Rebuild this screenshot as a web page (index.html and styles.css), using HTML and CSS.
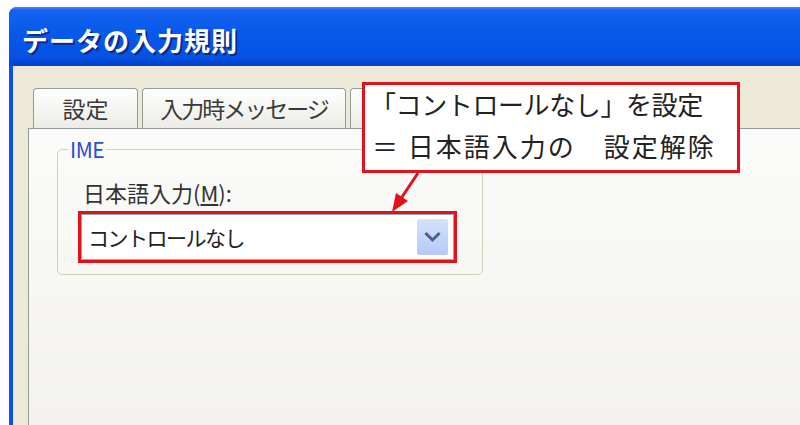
FILE: index.html
```html
<!DOCTYPE html>
<html>
<head>
  <title>データの入力規則</title>
  <link rel="stylesheet" href="styles.css">
</head>
<body>
  <div class="window">
    <div class="titlebar">データの入力規則</div>

    <div class="client">
      <div class="tabs">
        <div class="tab tab-settings">設定</div>
        <div class="tab tab-input">入力時メッセージ</div>
        <!-- these two sit under the callout -->
        <div class="tab tab-error"></div>
        <div class="tab tab-ime"></div>
      </div>

      <div class="panel">
        <fieldset class="group">
          <legend>IME</legend>
          <div class="field-label">日本語入力(<u>M</u>):</div>
          <div class="mark">
            <div class="combo">
              <span class="combo-text">コントロールなし</span>
              <span class="drop">
                <svg width="31" height="36" viewBox="0 0 31 36">
                  <polyline points="9.5,15 15.5,21 21.5,15" fill="none" stroke="#4d6185" stroke-width="3" stroke-linecap="square"/>
                </svg>
              </span>
            </div>
          </div>
        </fieldset>
      </div>
    </div>
  </div>

  <!-- annotation over the dialog -->
  <div class="callout">
    <div class="line1">「コントロールなし」を設定</div>
    <div class="line2">＝ 日本語入力の　設定解除</div>
  </div>

  <svg class="arrow" width="800" height="425" viewBox="0 0 800 425">
    <line x1="418" y1="173" x2="400" y2="200" stroke="#e2121c" stroke-width="3"/>
    <polygon points="392,212 408,201 396,193" fill="#e2121c"/>
  </svg>
</body>
</html>
```

FILE: styles.css
```css
body {
  margin: 0;
  padding: 0;
  background: #fff;
  font-family: "Noto Sans CJK JP", "Noto Sans", sans-serif;
  overflow: hidden;
}

.window {
  margin: 7px 0 0 9px;
  height: 418px;
  display: flex;
  flex-direction: column;
  background: #0a50e6;
  border-radius: 8px 0 0 0;
  overflow: hidden;
}

.titlebar {
  box-sizing: border-box;
  height: 59px;
  padding: 18px 0 0 13px;
  font-size: 26px;
  line-height: 30px;
  font-weight: bold;
  letter-spacing: 1px;
  color: #fff;
  text-shadow: 2px 2px 0 #0a2a8c;
  background: linear-gradient(#4a8cf7 0, #1563ee 3px, #0758ec 45%, #0552e2 85%, #0340c8 100%);
}

.client {
  flex: 1;
  display: flex;
  flex-direction: column;
  margin-left: 4px;
  padding: 22px 0 0 15px;
  background: #ece9d8;
}

.tabs {
  display: flex;
  gap: 4px;
  padding-left: 5px;
  height: 40px;
}

.tab {
  box-sizing: border-box;
  height: 40px;
  border: 1px solid #919b9c;
  border-bottom: none;
  border-radius: 4px 4px 0 0;
  background: linear-gradient(#ffffff, #ecebe6);
  color: #3a3a3a;
  font-size: 23px;
  line-height: 38px;
  text-align: center;
  white-space: nowrap;
}

.tab-settings {
  width: 105px;
}

.tab-input {
  width: 204px;
  letter-spacing: -2px;
}

.tab-error {
  width: 200px;
}

.tab-ime {
  width: 150px;
  background: #fcfcfe;
}

.panel {
  flex: 1;
  border-top: 1px solid #919b9c;
  border-left: 1px solid #919b9c;
  background: linear-gradient(#fbfbf9, #f3f2ee);
  padding: 10px 0 0 28px;
}

.group {
  box-sizing: border-box;
  width: 426px;
  margin: 0;
  padding: 0 20px 11px 10px;
  border: 1px solid #d0d0bf;
  border-radius: 5px;
}

.group legend {
  padding: 0 2px;
  font-size: 21px;
  line-height: 20px;
  letter-spacing: -0.5px;
  color: #2a4bd0;
}

.field-label {
  margin: 20px 0 0 15px;
  font-size: 22px;
  line-height: 26px;
  color: #333;
}

.field-label u {
  text-underline-offset: 2px;
}

.mark {
  margin: 6px 0 0 10px;
  border: 3px solid #e2121c;
  width: 373px;
}

.combo {
  box-sizing: border-box;
  height: 46px;
  display: flex;
  align-items: center;
  justify-content: space-between;
  padding: 4px 5px 4px 6px;
  border: 1px solid #8fa6c8;
  background: #fff;
}

.combo-text {
  font-size: 21px;
  letter-spacing: -1.5px;
  color: #222;
}

.drop {
  box-sizing: border-box;
  width: 31px;
  height: 36px;
  border-radius: 2px;
  background: linear-gradient(#d6e2fd, #b4c9f6);
  display: flex;
}

.callout {
  position: absolute;
  left: 362px;
  top: 82px;
  box-sizing: border-box;
  width: 378px;
  height: 91px;
  padding: 0 0 0 5px;
  border: 3px solid #e2121c;
  background: #fff;
  color: #222;
  font-size: 26px;
  line-height: 42px;
  white-space: nowrap;
}

.line1 {
  letter-spacing: -0.4px;
  margin-top: -2px;
}

.line2 {
  letter-spacing: 2px;
  padding-left: 2px;
}

.arrow {
  position: absolute;
  left: 0;
  top: 0;
  pointer-events: none;
}
```
